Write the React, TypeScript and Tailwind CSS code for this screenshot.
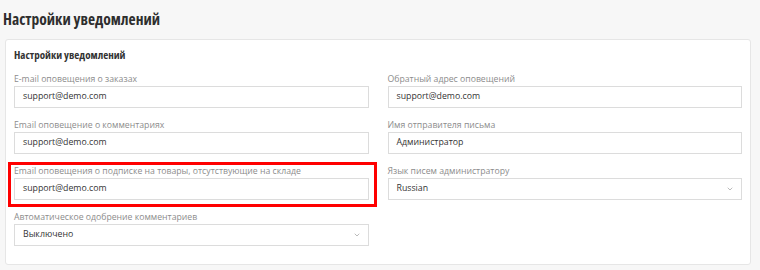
import React from 'react'
import { ChevronDown } from 'lucide-react'

const Field = ({ label, value, select, marked }: { label: string; value: string; select?: boolean; marked?: boolean }) => {
  return (
    <div className="relative">
      {marked && <div className="absolute top-0 -bottom-[7px] -left-[6px] -right-[8px] border-[3px] border-[#ff0000] pointer-events-none" />}
      <div className="h-4 pt-[2px] leading-[14px] text-[8.7px] text-[#8c8c8c] whitespace-nowrap">{label}</div>
      <div className="h-[22px] border border-[#dcdcdc] bg-white flex items-center justify-between pl-2 pr-[7px] text-[8.75px] text-[#333]">
        <span>{value}</span>
        {select && <ChevronDown size={8} strokeWidth={1.5} className="text-[#777]" />}
      </div>
    </div>
  )
}

const App = () => {
  return (
    <div className="w-[760px] h-[270px] bg-[#f7f7f7] overflow-hidden font-['Open_Sans',sans-serif]">
      <h1 className="pl-[3px] pt-[5px] h-[39px] text-[15.5px] leading-7 font-bold font-stretch-condensed text-[#2e2e2e]">Настройки уведомлений</h1>
      <div className="ml-[5px] w-[746px] bg-white border border-[#e6e6e6] rounded-[3px] px-2 pt-[6px] pb-[18px]">
        <div className="h-[18px] leading-[18px] text-[11px] font-bold font-stretch-condensed text-[#333] mb-[6px]">Настройки уведомлений</div>
        <div className="grid grid-cols-2 gap-x-[19px]">
          <div className="flex flex-col gap-2">
            <Field label="E-mail оповещения о заказах" value="support@demo.com" />
            <Field label="Email оповещение о комментариях" value="support@demo.com" />
            <Field label="Email оповещения о подписке на товары, отсутствующие на складе" value="support@demo.com" marked />
            <Field label="Автоматическое одобрение комментариев" value="Выключено" select />
          </div>
          <div className="flex flex-col gap-2">
            <Field label="Обратный адрес оповещений" value="support@demo.com" />
            <Field label="Имя отправителя письма" value="Администратор" />
            <Field label="Язык писем администратору" value="Russian" select />
          </div>
        </div>
      </div>
    </div>
  )
}

export default App
